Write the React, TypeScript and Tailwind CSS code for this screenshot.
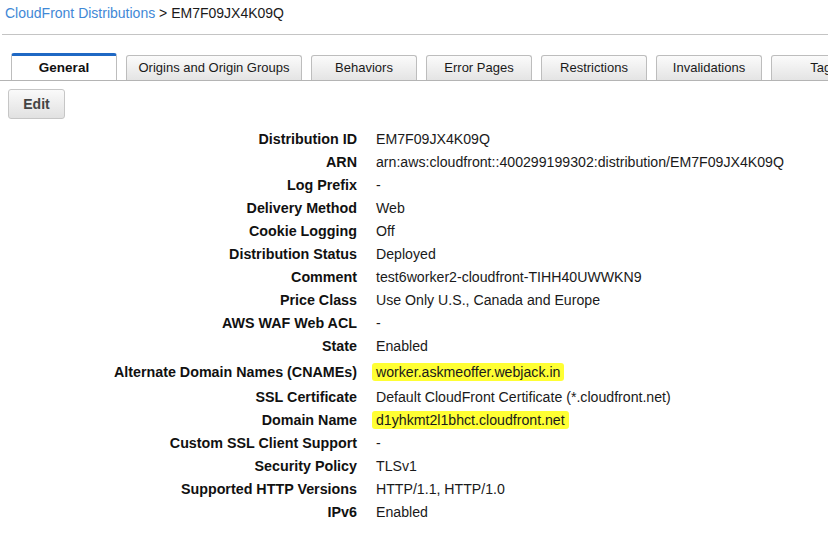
import React from 'react';

const TABS = [
  { label: 'General', w: 'w-[106px]' },
  { label: 'Origins and Origin Groups', w: 'w-[176px]' },
  { label: 'Behaviors', w: 'w-[106px]' },
  { label: 'Error Pages', w: 'w-[106px]' },
  { label: 'Restrictions', w: 'w-[106px]' },
  { label: 'Invalidations', w: 'w-[106px]' },
  { label: 'Tags', w: 'w-[106px]' },
];

type Row = { label: string; value: string; mark?: boolean; h: string };

const ROWS: Row[] = [
  { label: 'Distribution ID', value: 'EM7F09JX4K09Q', h: 'h-[23px]' },
  { label: 'ARN', value: 'arn:aws:cloudfront::400299199302:distribution/EM7F09JX4K09Q', h: 'h-[23px]' },
  { label: 'Log Prefix', value: '-', h: 'h-[23px]' },
  { label: 'Delivery Method', value: 'Web', h: 'h-[23px]' },
  { label: 'Cookie Logging', value: 'Off', h: 'h-[23px]' },
  { label: 'Distribution Status', value: 'Deployed', h: 'h-[23px]' },
  { label: 'Comment', value: 'test6worker2-cloudfront-TIHH40UWWKN9', h: 'h-[23px]' },
  { label: 'Price Class', value: 'Use Only U.S., Canada and Europe', h: 'h-[23px]' },
  { label: 'AWS WAF Web ACL', value: '-', h: 'h-[23px]' },
  { label: 'State', value: 'Enabled', h: 'h-[23px]' },
  { label: 'Alternate Domain Names (CNAMEs)', value: 'worker.askmeoffer.webjack.in', mark: true, h: 'h-[28px] pt-[2px]' },
  { label: 'SSL Certificate', value: 'Default CloudFront Certificate (*.cloudfront.net)', h: 'h-[23px]' },
  { label: 'Domain Name', value: 'd1yhkmt2l1bhct.cloudfront.net', mark: true, h: 'h-[23px]' },
  { label: 'Custom SSL Client Support', value: '-', h: 'h-[23px]' },
  { label: 'Security Policy', value: 'TLSv1', h: 'h-[23px]' },
  { label: 'Supported HTTP Versions', value: 'HTTP/1.1, HTTP/1.0', h: 'h-[23px]' },
  { label: 'IPv6', value: 'Enabled', h: 'h-[23px]' },
];

export default function App() {
  return (
    <div className="w-[828px] h-[537px] overflow-hidden bg-white text-[14px] text-[#1a1a1a] font-['Liberation_Sans',Arial,sans-serif]">
      {/* breadcrumb */}
      <div className="h-[27px] pl-[5px] pt-[4px] leading-[18px]">
        <span className="text-[#3f88d6]">CloudFront Distributions</span>
        <span> &gt; EM7F09JX4K09Q</span>
      </div>
      <div className="ml-[2px] h-[1px] bg-[#c4c4c4] mt-[7px]" />

      {/* tabs */}
      <div className="mt-[18px] flex items-end gap-[9px] pl-[11px] border-b border-[#b4b4b4] h-[28px] overflow-hidden whitespace-nowrap">
        {TABS.map((t, i) =>
          i === 0 ? (
            <div
              key={t.label}
              className={`${t.w} shrink-0 h-[28px] -mb-[1px] bg-white border-x border-[#bdbdbd] border-t-[3px] border-t-[#1f68c4] rounded-t-[3px] flex items-center justify-center font-bold text-[13.5px] text-[#111]`}
            >
              {t.label}
            </div>
          ) : (
            <div
              key={t.label}
              className={`${t.w} shrink-0 h-[25px] bg-gradient-to-b from-[#fbfbfb] to-[#e4e4e4] border-x border-t border-[#bdbdbd] rounded-t-[3px] flex items-center justify-center text-[13px] text-[#1a1a1a]`}
            >
              {t.label}
            </div>
          )
        )}
      </div>

      {/* edit */}
      <div className="pl-[8px] pt-[8px]">
        <button className="w-[57px] h-[30px] rounded-[3px] border border-[#c6c6c6] bg-gradient-to-b from-[#fafafa] to-[#e1e1e1] font-bold text-[14px] text-[#444]">
          Edit
        </button>
      </div>

      {/* details */}
      <div className="mt-[9px] flex flex-col">
        {ROWS.map((r) => (
          <div key={r.label} className={`${r.h} flex items-center`}>
            <div className="w-[357px] shrink-0 text-right font-bold text-[14.3px] text-[#111]">{r.label}</div>
            <div className="pl-[19px] whitespace-nowrap text-[14.15px]">
              {r.mark ? (
                <span className="relative -ml-[4px] px-[4px] py-[1px] bg-[#ffff33] rounded-[3px]">{r.value}</span>
              ) : (
                r.value
              )}
            </div>
          </div>
        ))}
      </div>
    </div>
  );
}
